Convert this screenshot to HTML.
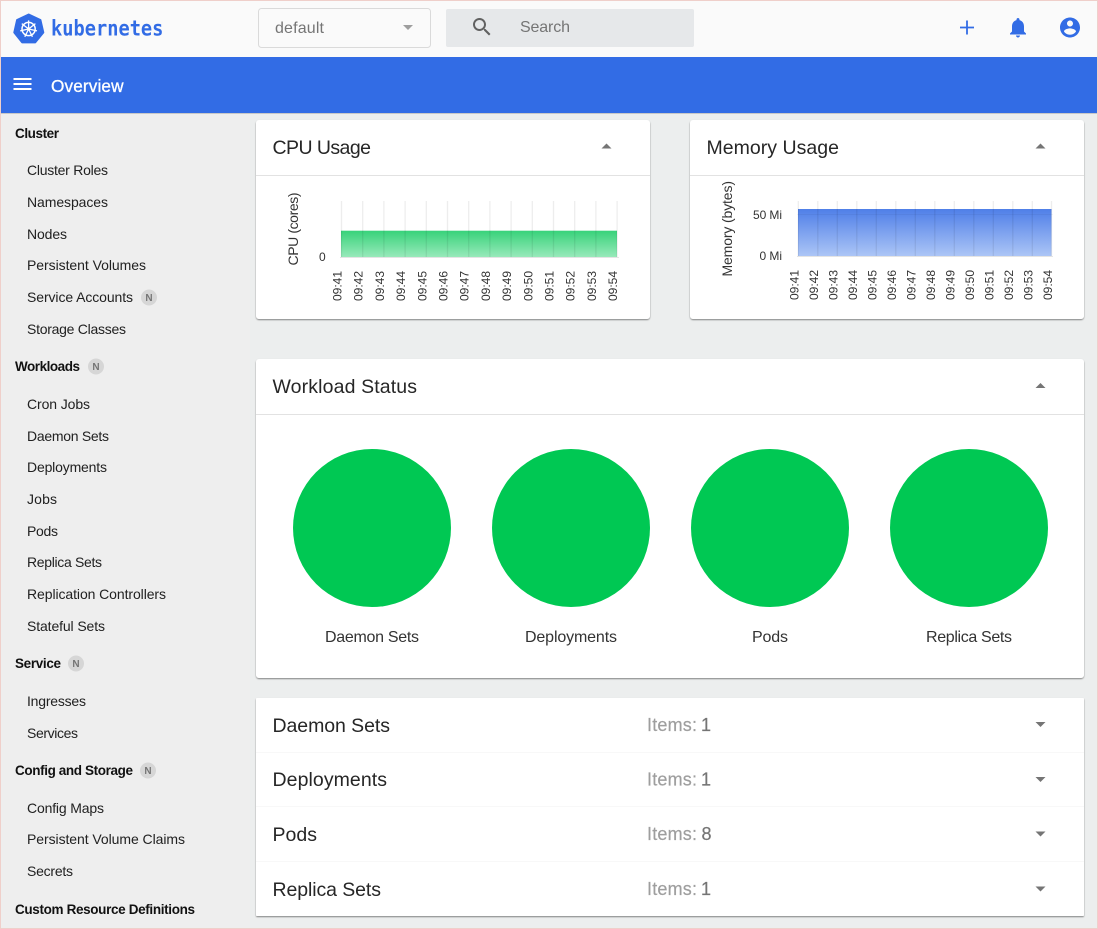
<!DOCTYPE html>
<html><head><meta charset="utf-8"><title>Overview</title>
<style>
html,body{margin:0;padding:0;width:1098px;height:929px;overflow:hidden;background:#eceeee}
svg{display:block;position:absolute;left:0;top:0}
text{font-family:"Liberation Sans",Arial,sans-serif}
.n{font-size:14px;fill:#212121}
.b{font-size:13.5px;font-weight:700;fill:#111}
.t{font-size:19.5px;fill:#262626}
.a{font-size:12px;fill:#333}
.l{font-size:16px;fill:#333}
.i{font-size:18px;fill:#9e9e9e;stroke:#9e9e9e;stroke-width:.2}
.v{font-size:18px;fill:#757575;stroke:#757575;stroke-width:.2}
.bd{font-size:10px;font-weight:700;fill:#757575;text-anchor:middle}
</style></head>
<body>
<svg width="1098" height="929" viewBox="0 0 1098 929" xmlns="http://www.w3.org/2000/svg">
<defs>
<linearGradient id="g" x1="0" y1="0" x2="0" y2="1"><stop offset="0" stop-color="#38d27a"/><stop offset="1" stop-color="#9aeabc"/></linearGradient>
<linearGradient id="m" x1="0" y1="0" x2="0" y2="1"><stop offset="0" stop-color="#4f7fe8"/><stop offset="1" stop-color="#adc6f6"/></linearGradient>
<filter id="s" x="-2%" y="-2%" width="104%" height="104%"><feDropShadow dx="0" dy="1" stdDeviation="0.8" flood-color="#000" flood-opacity="0.45"/></filter>
</defs>
<rect width="1098" height="929" fill="#eceeee"/>
<rect x="0" y="0" width="250" height="929" fill="#eeeeee"/>
<!-- top bar -->
<rect width="1098" height="57" fill="#fafafa"/>
<rect x="1" y="57" width="1096" height="56" fill="#326ce5"/>
<rect x="1" y="113" width="1096" height="1" fill="#c8c8c8"/>
<!-- logo -->
<polygon points="28.7,14.5 40.4,20 43.3,32.5 35.2,42.4 22.2,42.4 14.3,32.5 17.1,20" fill="#326ce5" stroke="#326ce5" stroke-width="2" stroke-linejoin="round"/>
<g stroke="#fff" fill="none">
<circle cx="28.6" cy="29" r="6.6" stroke-width="1.5"/>
<path stroke-width="1.3" d="M28.6 29V20.4M28.6 29L35.4 23.6M28.6 29L37 30.9M28.6 29L32.4 36.8M28.6 29L24.8 36.8M28.6 29L20.2 30.9M28.6 29L21.8 23.6"/>
</g>
<circle cx="28.6" cy="29" r="1.7" fill="#fff"/>
<text transform="translate(51,35.7) scale(.89,1)" font-size="21" font-weight="700" fill="#326ce5" style="font-family:'DejaVu Sans Mono','Liberation Mono',monospace">kubernetes</text>
<!-- select -->
<rect x="258.5" y="8.5" width="172" height="39" rx="3" fill="#fafafa" stroke="#dadada"/>
<text x="275" y="33" font-size="16" fill="#757575" textLength="49" lengthAdjust="spacing">default</text>
<polygon points="403,25 413,25 408,30" fill="#9e9e9e"/>
<!-- search -->
<rect x="446" y="9" width="248" height="38" rx="2" fill="#e6e8ea"/>
<path transform="translate(470,15)" fill="#616161" d="M15.5 14h-.79l-.28-.27C15.41 12.59 16 11.11 16 9.5 16 5.91 13.09 3 9.5 3S3 5.91 3 9.5 5.91 16 9.5 16c1.61 0 3.09-.59 4.23-1.57l.27.28v.79l5 4.99L20.49 19l-4.99-5zm-6 0C7.01 14 5 11.99 5 9.5S7.01 5 9.5 5 14 7.01 14 9.5 11.99 14 9.5 14z"/>
<text x="520" y="32" font-size="16" fill="#757575" textLength="50" lengthAdjust="spacing">Search</text>
<!-- right icons -->
<path transform="translate(955,15.5)" fill="#326ce5" d="M19 12.9h-6.1V19h-1.8v-6.1H5v-1.8h6.1V5h1.8v6.1H19v1.8z"/>
<path transform="translate(1006,15.5)" fill="#326ce5" d="M12 22c1.1 0 2-.9 2-2h-4c0 1.1.89 2 2 2zm6-6v-5c0-3.07-1.64-5.64-4.5-6.32V4c0-.83-.67-1.5-1.5-1.5s-1.5.67-1.5 1.5v.68C7.63 5.36 6 7.92 6 11v5l-2 2v1h16v-1l-2-2z"/>
<path transform="translate(1058,15.5)" fill="#326ce5" d="M12 2C6.48 2 2 6.48 2 12s4.48 10 10 10 10-4.48 10-10S17.52 2 12 2zm0 3c1.66 0 3 1.34 3 3s-1.34 3-3 3-3-1.34-3-3 1.34-3 3-3zm0 14.2c-2.5 0-4.71-1.28-6-3.22.03-1.99 4-3.08 6-3.08 1.99 0 5.97 1.09 6 3.08-1.29 1.94-3.5 3.22-6 3.22z"/>
<!-- blue bar -->
<path transform="translate(10.5,72)" fill="#fff" d="M3 18h18v-2H3v2zm0-5h18v-2H3v2zm0-7v2h18V6H3z"/>
<text x="51" y="92" font-size="17.2" fill="#fff" stroke="#fff" stroke-width=".3" textLength="72.5" lengthAdjust="spacing">Overview</text>
<!-- sidebar -->
<text class="b" x="15" y="138" textLength="44" lengthAdjust="spacing">Cluster</text>
<text class="n" x="27" y="175" textLength="81" lengthAdjust="spacing">Cluster Roles</text>
<text class="n" x="27" y="207" textLength="81" lengthAdjust="spacing">Namespaces</text>
<text class="n" x="27" y="239" textLength="40" lengthAdjust="spacing">Nodes</text>
<text class="n" x="27" y="270" textLength="119" lengthAdjust="spacing">Persistent Volumes</text>
<text class="n" x="27" y="302" textLength="106" lengthAdjust="spacing">Service Accounts</text>
<circle cx="149" cy="297.5" r="8" fill="#d6d6d6"/><text class="bd" x="149" y="301">N</text>
<text class="n" x="27" y="334" textLength="99" lengthAdjust="spacing">Storage Classes</text>
<text class="b" x="15" y="371" textLength="65" lengthAdjust="spacing">Workloads</text>
<circle cx="96" cy="366.5" r="8" fill="#d6d6d6"/><text class="bd" x="96" y="370">N</text>
<text class="n" x="27" y="409" textLength="63" lengthAdjust="spacing">Cron Jobs</text>
<text class="n" x="27" y="441" textLength="82" lengthAdjust="spacing">Daemon Sets</text>
<text class="n" x="27" y="472" textLength="80" lengthAdjust="spacing">Deployments</text>
<text class="n" x="27" y="504" textLength="30" lengthAdjust="spacing">Jobs</text>
<text class="n" x="27" y="536" textLength="31" lengthAdjust="spacing">Pods</text>
<text class="n" x="27" y="567" textLength="75" lengthAdjust="spacing">Replica Sets</text>
<text class="n" x="27" y="599" textLength="139" lengthAdjust="spacing">Replication Controllers</text>
<text class="n" x="27" y="631" textLength="78" lengthAdjust="spacing">Stateful Sets</text>
<text class="b" x="15" y="668" textLength="46" lengthAdjust="spacing">Service</text>
<circle cx="76" cy="663.5" r="8" fill="#d6d6d6"/><text class="bd" x="76" y="667">N</text>
<text class="n" x="27" y="706" textLength="59" lengthAdjust="spacing">Ingresses</text>
<text class="n" x="27" y="738" textLength="51" lengthAdjust="spacing">Services</text>
<text class="b" x="15" y="775" textLength="118" lengthAdjust="spacing">Config and Storage</text>
<circle cx="148" cy="770.5" r="8" fill="#d6d6d6"/><text class="bd" x="148" y="774">N</text>
<text class="n" x="27" y="813" textLength="77" lengthAdjust="spacing">Config Maps</text>
<text class="n" x="27" y="844" textLength="158" lengthAdjust="spacing">Persistent Volume Claims</text>
<text class="n" x="27" y="876" textLength="46" lengthAdjust="spacing">Secrets</text>
<text class="b" x="15" y="914" textLength="180" lengthAdjust="spacing">Custom Resource Definitions</text>
<!-- cards -->
<rect x="256" y="120" width="394" height="199" rx="3" fill="#fff" filter="url(#s)"/>
<rect x="690" y="120" width="394" height="199" rx="3" fill="#fff" filter="url(#s)"/>
<rect x="256" y="359" width="828" height="319" rx="3" fill="#fff" filter="url(#s)"/>
<rect x="256" y="698" width="828" height="218" rx="1" fill="#fff" filter="url(#s)"/>
<rect x="256" y="175" width="394" height="1" fill="#e2e2e2"/>
<rect x="690" y="175" width="394" height="1" fill="#e2e2e2"/>
<rect x="256" y="414" width="828" height="1" fill="#e2e2e2"/>
<rect x="256" y="752" width="828" height="1" fill="#f8f8f8"/>
<rect x="256" y="806" width="828" height="1" fill="#f8f8f8"/>
<rect x="256" y="861" width="828" height="1" fill="#f8f8f8"/>
<text class="t" x="272.5" y="154" textLength="98.5" lengthAdjust="spacing">CPU Usage</text>
<text class="t" x="706.5" y="154" textLength="132.5" lengthAdjust="spacing">Memory Usage</text>
<text class="t" x="272.5" y="393" textLength="144.5" lengthAdjust="spacing">Workload Status</text>
<polygon points="601.5,148.5 611.5,148.5 606.5,143.5" fill="#757575"/>
<polygon points="1035.5,148.5 1045.5,148.5 1040.5,143.5" fill="#757575"/>
<polygon points="1035.5,388 1045.5,388 1040.5,383" fill="#757575"/>
<!-- CPU chart -->
<rect x="341" y="230.7" width="276" height="27" fill="url(#g)"/>
<g stroke="#000" stroke-opacity=".07" stroke-width="1.3">
<path d="M341.5 201V258M362.7 201V258M383.9 201V258M405.1 201V258M426.3 201V258M447.5 201V258M468.7 201V258M489.9 201V258M511.1 201V258M532.3 201V258M553.5 201V258M574.7 201V258M595.9 201V258M617.1 201V258"/>
</g>
<rect x="340" y="257" width="279" height="1" fill="#e4e4e4"/>
<text class="n" transform="translate(298,265.5) rotate(-90)" textLength="73" lengthAdjust="spacing" style="fill:#333">CPU (cores)</text>
<text class="a" x="319" y="261">0</text>
<g>
<text class="a" transform="translate(341.5,301) rotate(-90)">09:41</text>
<text class="a" transform="translate(362.7,301) rotate(-90)">09:42</text>
<text class="a" transform="translate(383.9,301) rotate(-90)">09:43</text>
<text class="a" transform="translate(405.1,301) rotate(-90)">09:44</text>
<text class="a" transform="translate(426.3,301) rotate(-90)">09:45</text>
<text class="a" transform="translate(447.5,301) rotate(-90)">09:46</text>
<text class="a" transform="translate(468.7,301) rotate(-90)">09:47</text>
<text class="a" transform="translate(489.9,301) rotate(-90)">09:48</text>
<text class="a" transform="translate(511.1,301) rotate(-90)">09:49</text>
<text class="a" transform="translate(532.3,301) rotate(-90)">09:50</text>
<text class="a" transform="translate(553.5,301) rotate(-90)">09:51</text>
<text class="a" transform="translate(574.7,301) rotate(-90)">09:52</text>
<text class="a" transform="translate(595.9,301) rotate(-90)">09:53</text>
<text class="a" transform="translate(617.1,301) rotate(-90)">09:54</text>
</g>
<!-- Memory chart -->
<rect x="798" y="209" width="253.5" height="47.5" fill="url(#m)"/>
<g stroke="#000" stroke-opacity=".07" stroke-width="1.3">
<path d="M798.3 201V257M817.8 201V257M837.3 201V257M856.8 201V257M876.3 201V257M895.8 201V257M915.3 201V257M934.8 201V257M954.3 201V257M973.8 201V257M993.3 201V257M1012.8 201V257M1032.3 201V257M1051.5 201V257"/>
</g>
<path d="M797 214.5H1053" stroke="#000" stroke-opacity=".04" stroke-width="1"/>
<rect x="797" y="256" width="256" height="1" fill="#e4e4e4"/>
<text class="n" transform="translate(732,276.5) rotate(-90)" textLength="95.5" lengthAdjust="spacing" style="fill:#333">Memory (bytes)</text>
<text class="a" x="753" y="219" textLength="29" lengthAdjust="spacing">50 Mi</text>
<text class="a" x="759.5" y="260" textLength="22.5" lengthAdjust="spacing">0 Mi</text>
<g>
<text class="a" transform="translate(798.5,300) rotate(-90)">09:41</text>
<text class="a" transform="translate(818,300) rotate(-90)">09:42</text>
<text class="a" transform="translate(837.5,300) rotate(-90)">09:43</text>
<text class="a" transform="translate(857,300) rotate(-90)">09:44</text>
<text class="a" transform="translate(876.5,300) rotate(-90)">09:45</text>
<text class="a" transform="translate(896,300) rotate(-90)">09:46</text>
<text class="a" transform="translate(915.5,300) rotate(-90)">09:47</text>
<text class="a" transform="translate(935,300) rotate(-90)">09:48</text>
<text class="a" transform="translate(954.5,300) rotate(-90)">09:49</text>
<text class="a" transform="translate(974,300) rotate(-90)">09:50</text>
<text class="a" transform="translate(993.5,300) rotate(-90)">09:51</text>
<text class="a" transform="translate(1013,300) rotate(-90)">09:52</text>
<text class="a" transform="translate(1032.5,300) rotate(-90)">09:53</text>
<text class="a" transform="translate(1052,300) rotate(-90)">09:54</text>
</g>
<!-- workload circles -->
<circle cx="372" cy="528" r="79" fill="#00c853"/>
<circle cx="571" cy="528" r="79" fill="#00c853"/>
<circle cx="770" cy="528" r="79" fill="#00c853"/>
<circle cx="969" cy="528" r="79" fill="#00c853"/>
<text class="l" x="325" y="642" textLength="94" lengthAdjust="spacing">Daemon Sets</text>
<text class="l" x="525" y="642" textLength="92" lengthAdjust="spacing">Deployments</text>
<text class="l" x="752" y="642" textLength="36" lengthAdjust="spacing">Pods</text>
<text class="l" x="926" y="642" textLength="86" lengthAdjust="spacing">Replica Sets</text>
<!-- item rows -->
<text class="t" x="272.5" y="732" textLength="117.5" lengthAdjust="spacing">Daemon Sets</text>
<text class="t" x="272.5" y="786" textLength="114.5" lengthAdjust="spacing">Deployments</text>
<text class="t" x="272.5" y="841" textLength="44.5" lengthAdjust="spacing">Pods</text>
<text class="t" x="272.5" y="896" textLength="108.5" lengthAdjust="spacing">Replica Sets</text>
<text class="i" x="647" y="731" textLength="50" lengthAdjust="spacing">Items:</text><text class="v" x="701" y="731">1</text>
<text class="i" x="647" y="785.5" textLength="50" lengthAdjust="spacing">Items:</text><text class="v" x="701" y="785.5">1</text>
<text class="i" x="647" y="840" textLength="50" lengthAdjust="spacing">Items:</text><text class="v" x="701.5" y="840">8</text>
<text class="i" x="647" y="895" textLength="50" lengthAdjust="spacing">Items:</text><text class="v" x="701" y="895">1</text>
<polygon points="1035.5,722 1045.5,722 1040.5,727" fill="#757575"/>
<polygon points="1035.5,777 1045.5,777 1040.5,782" fill="#757575"/>
<polygon points="1035.5,831.5 1045.5,831.5 1040.5,836.5" fill="#757575"/>
<polygon points="1035.5,886.5 1045.5,886.5 1040.5,891.5" fill="#757575"/>
<!-- outer border -->
<rect x="0.5" y="0.5" width="1097" height="928" fill="none" stroke="#efcfca"/>
</svg>
</body></html>
